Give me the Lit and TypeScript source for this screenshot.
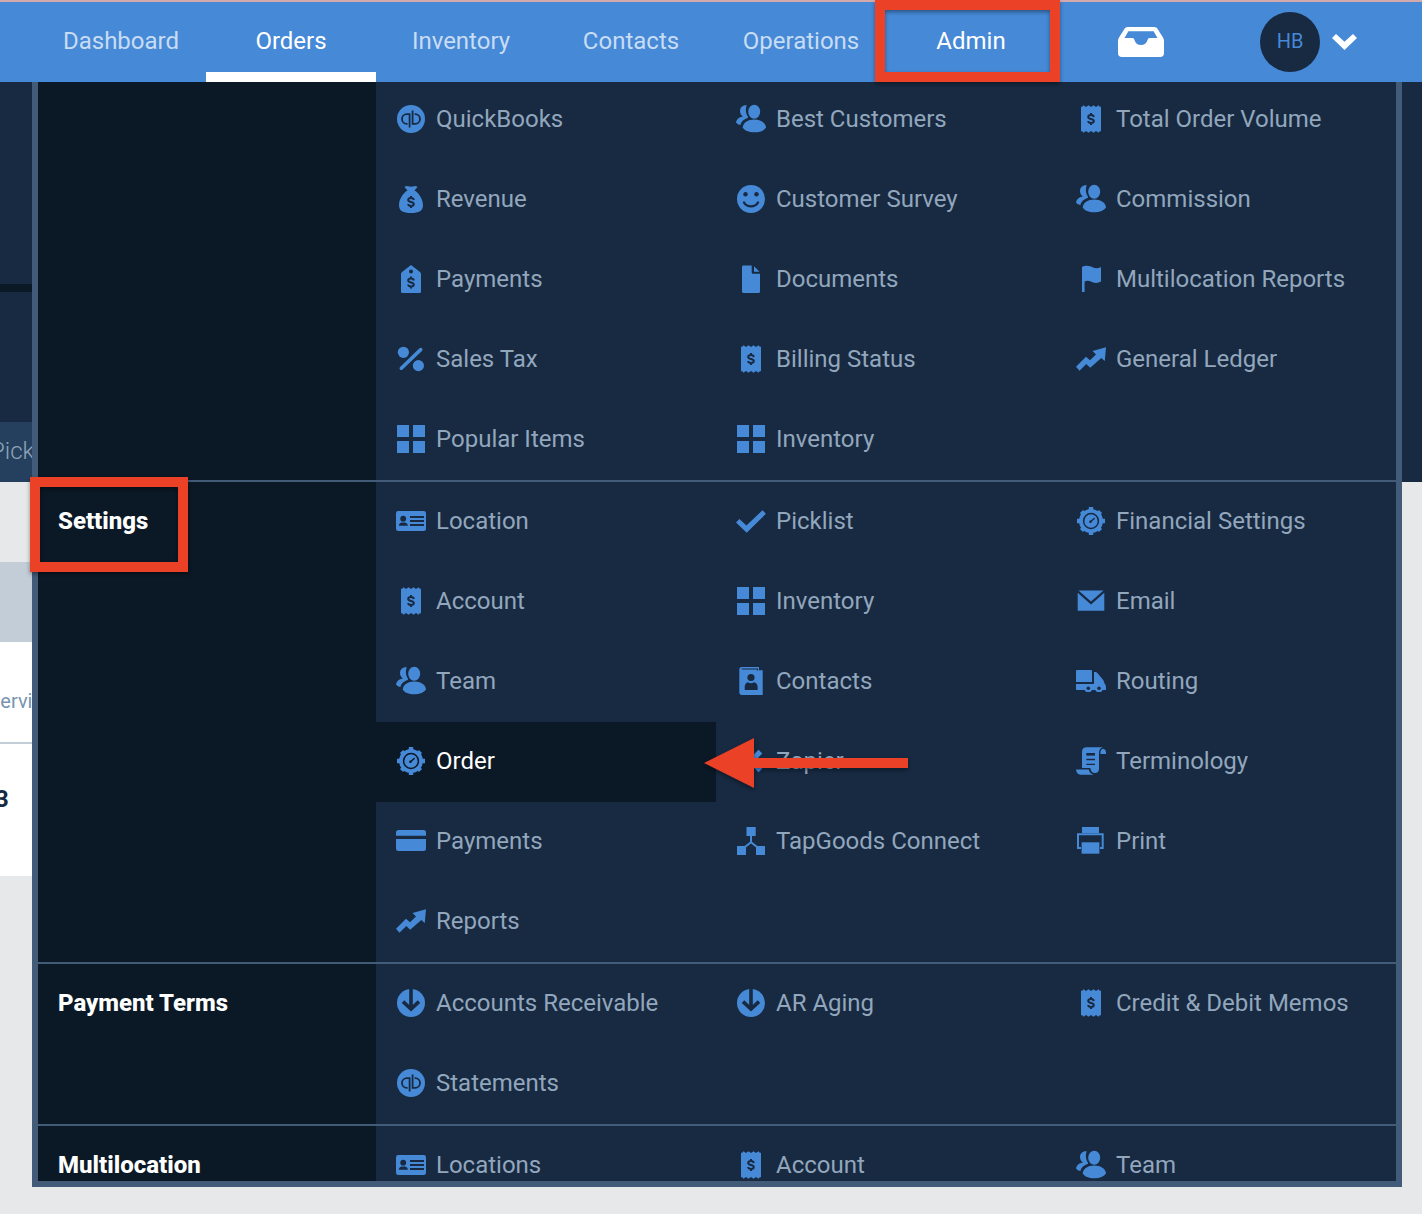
import { LitElement, html, css, svg, type SVGTemplateResult } from "lit";
import { customElement, property } from "lit/decorators.js";
import { classMap } from "lit/directives/class-map.js";

const dollar = (y: number) => svg`
  <g class="cut-line" transform="translate(15 ${y})" stroke-width="2">
    <path d="M2.8-2C2.6-3.3 1.4-4 0-4C-1.7-4-2.8-3.2-2.8-2C-2.8.8 2.8-.8 2.8 2C2.8 3.2 1.7 4 0 4C-1.5 4-2.7 3.3-2.8 2M0-6V-4M0 4V6" />
  </g>`;

const icons: Record<string, SVGTemplateResult> = {
  quickbooks: svg`
    <circle cx="15" cy="15" r="14" />
    <path class="cut-line" stroke-width="1.8" d="M13.6 23.4V10.2H10.8a4.8 4.8 0 0 0 0 9.6h.8M16.6 6.6V19.8h2.6a4.8 4.8 0 0 0 0-9.6h-.6" />`,
  moneybag: svg`
    <path d="M8.5 3Q10 1.4 12 2.3Q15 3.2 18 2.3Q20 1.4 21.5 3L18.5 6.5C23 9 27 15.500 27 21C27 27 23 29 15 29S3 27 3 21C3 15.500 7 9 11.500 6.500Z" />
    ${dollar(18)}`,
  tag: svg`
    <path d="M15 1L24 8Q25 8.800 25 10V27.500Q25 29 23.500 29H6.500Q5 29 5 27.500V10Q5 8.800 6 8Z" />
    <circle class="cut" cx="15" cy="7.500" r="2" />
    ${dollar(18.5)}`,
  percent: svg`
    <circle cx="7.400" cy="8.300" r="5.600" />
    <circle cx="22.400" cy="21.600" r="5.600" />
    <path class="line" stroke-width="3.600" stroke-linecap="round" d="M5.300 24.200L24.700 5.600" />`,
  grid: svg`<path d="M1 1H13V13H1ZM17 1H29V13H17ZM1 17H13V29H1ZM17 17H29V29H17Z" />`,
  people: svg`
    <ellipse cx="18.200" cy="7.800" rx="6" ry="7" />
    <path d="M6.700 23.500C7 18.500 12 15.500 18.300 15.500S29.700 18.500 30 23.500C28 26.700 24 28.300 18.300 28.300S8.500 26.700 6.700 23.500Z" />
    <path d="M10.800 1.200C6.500.8 4 3.500 4 7C4 9.500 5.200 11.600 7 12.400C3 12.900 .4 15.400 0 18.600Q1.600 20.700 4.300 21C5.200 17.500 8 15 12 13.700L11.800 12.200C9.600 9.500 9.400 4.200 10.800 1.200Z" />`,
  smile: svg`
    <circle cx="15" cy="15" r="14" />
    <circle class="cut" cx="9.500" cy="10.200" r="2.200" />
    <circle class="cut" cx="20.500" cy="10.200" r="2.200" />
    <path class="cut-line" stroke-width="2.400" stroke-linecap="round" d="M8 18.500C11 23.600 19 23.600 22 18.500" />`,
  file: svg`
    <path d="M7.500 1.600H15.700V8.500Q15.700 9.800 17 9.800H24V27.500Q24 29 22.500 29H7.500Q6 29 6 27.500V3Q6 1.600 7.500 1.600Z" />
    <path d="M18 2.200L23.600 7.800H18Z" />`,
  receipt: svg`
    <path d="M5 2.600L6 3L7.500 1.200L10 3L12.500 1.200L15 3L17.500 1.200L20 3L22.500 1.200L24 3L25 2.600V27.400L24 27L22.500 28.800L20 27L17.500 28.800L15 27L12.500 28.800L10 27L7.500 28.800L6 27L5 27.400Z" />
    ${dollar(15)}`,
  flag: svg`<path d="M6 3C11 .8 14 2.300 17 3.500C20 4.600 22.500 4.400 25 3V17.500C22 19.300 19 19.300 16 18C13 16.700 11 16.500 8.600 17.400V28H6Z" />`,
  trend: svg`<path d="M0 22.700L10 12.700L14 16.300L20 10.500L16.500 7L30 3.300L28.800 17L25.300 14L14.200 23.700L10.300 20L3.500 26.700Z" />`,
  idcard: svg`
    <rect y="5" width="30" height="20" rx="2.200" />
    <circle class="cut" cx="7.200" cy="12.700" r="2.900" />
    <path class="cut" d="M2.800 19.700C3 17.300 4.600 16.600 6 16.400H8.400C10 16.600 11.600 17.300 11.900 19.700Z" />
    <path class="cut-line" stroke-width="1.900" d="M14 11H28M14 15H28M14 19H28" />`,
  gear: svg`
    <circle cx="15" cy="15" r="12" />
    <path class="line" stroke-width="4.400" d="M15 1V29M1 15H29M5.500 5.500L24.500 24.500M24.500 5.500L5.500 24.500" />
    <circle class="cut-ring" cx="15" cy="15" r="7.400" stroke-width="1.500" />
    <path class="cut-line" stroke-width="1.400" stroke-linecap="round" d="M14.200 16L18.200 12.400" />
    <circle class="cut" cx="14.500" cy="15.700" r="1.200" />`,
  card: svg`<path d="M2.500 4H27.500Q30 4 30 6.500V9.700H0V6.500Q0 4 2.500 4ZM0 13H30V22.500Q30 25 27.500 25H2.500Q0 25 0 22.500Z" />`,
  check: svg`<path d="M0 16.500L3.400 13L10.400 19.400L26.500 4.300L29.900 7.800L10.700 26.800Z" />`,
  cross: svg`<path class="line" stroke-width="5.400" d="M5.600 5.600L24.400 24.400M24.400 5.600L5.600 24.400" />`,
  addressbook: svg`
    <path d="M6 1H23V4.200H26.700V29H6Q3.300 29 3.300 26.300V3.700Q3.300 1 6 1Z" />
    <path class="cut-line" stroke-width="1.200" d="M5.800 3H21.500V4.600" />
    <circle class="cut" cx="15" cy="11.500" r="3.600" />
    <path class="cut" d="M8.700 24V20.500Q9 17 12 16.300Q15 18.300 18 16.300Q21.300 17 21.600 20.500V24Z" />`,
  network: svg`
    <path d="M10.500 1H19.700V10H10.500ZM1 20H10V29H1ZM20 20H29V29H20Z" />
    <path class="line" stroke-width="2" d="M15 9V16.500M7 22.500L15 16.300L23 22.500" />`,
  mail: svg`<path d="M2.500 4.600H27.500L15 15.500ZM1.700 6.800L15 18.500L28.300 6.800V24.700H1.700Z" />`,
  truck: svg`
    <path d="M0 5Q0 4 1 4H15Q16 4 16 5V16H0Z" />
    <path d="M0 18H18V6H19.500Q21 6.300 22 7.800L27 13.800Q28 15 28.300 17L29.600 19Q30 20 30 24H0.800Q0 24 0 23Z" />
    <circle cx="12.300" cy="22.200" r="3.900" />
    <circle cx="23" cy="22.200" r="3.900" />
    <circle class="cut" cx="12.300" cy="22.200" r="1.800" />
    <circle class="cut" cx="23" cy="22.200" r="1.800" />`,
  scroll: svg`
    <path d="M10 1.300H27Q23 2.300 23 7V23Q22.800 27 19 27Q15 27 14.300 22H6V6Q6 1.600 10 1.300Z" />
    <path d="M24.400 8V6Q24.800 3 27.200 2.800Q29.800 3.200 30 6V8Z" />
    <path d="M0 23.500H12.800Q13.400 27.300 17.500 28.700H4.500Q.6 28.200 0 23.500Z" />
    <path class="cut-line" d="M10.300 8.300H19" stroke-width="2.600" />
    <path class="cut-line" d="M10.300 13.500H19M10.300 18.400H19" stroke-width="1.400" />`,
  printer: svg`
    <path d="M6 1H23V7H6Z" />
    <path class="line" stroke-width="2" d="M5 22H2V8.300H26.700V22H24" />
    <path d="M5.600 16.300H23.400V27.700H5.600Z" />`,
  download: svg`
    <circle cx="15" cy="15" r="14" />
    <path class="cut-line" stroke-width="3.600" d="M15 0V19M7 13.600L15 21L23 13.600" />`,
};

interface MenuItem {
  label: string;
  icon: string;
  active?: boolean;
}

interface MenuSection {
  title: string;
  items: MenuItem[];
}

const item = (label: string, icon: string, active = false): MenuItem => ({ label, icon, active });

const sections: MenuSection[] = [
  {
    title: "",
    items: [
      item("QuickBooks", "quickbooks"),
      item("Best Customers", "people"),
      item("Total Order Volume", "receipt"),
      item("Revenue", "moneybag"),
      item("Customer Survey", "smile"),
      item("Commission", "people"),
      item("Payments", "tag"),
      item("Documents", "file"),
      item("Multilocation Reports", "flag"),
      item("Sales Tax", "percent"),
      item("Billing Status", "receipt"),
      item("General Ledger", "trend"),
      item("Popular Items", "grid"),
      item("Inventory", "grid"),
    ],
  },
  {
    title: "Settings",
    items: [
      item("Location", "idcard"),
      item("Picklist", "check"),
      item("Financial Settings", "gear"),
      item("Account", "receipt"),
      item("Inventory", "grid"),
      item("Email", "mail"),
      item("Team", "people"),
      item("Contacts", "addressbook"),
      item("Routing", "truck"),
      item("Order", "gear", true),
      item("Zapier", "cross"),
      item("Terminology", "scroll"),
      item("Payments", "card"),
      item("TapGoods Connect", "network"),
      item("Print", "printer"),
      item("Reports", "trend"),
    ],
  },
  {
    title: "Payment Terms",
    items: [
      item("Accounts Receivable", "download"),
      item("AR Aging", "download"),
      item("Credit & Debit Memos", "receipt"),
      item("Statements", "quickbooks"),
    ],
  },
  {
    title: "Multilocation",
    items: [item("Locations", "idcard"), item("Account", "receipt"), item("Team", "people")],
  },
];

@customElement("menu-icon")
class MenuIcon extends LitElement {
  @property() name = "";

  static styles = css`
    :host {
      display: block;
      flex: none;
      width: 30px;
      height: 30px;
    }
    svg {
      display: block;
      fill: #4689d7;
    }
    .line {
      fill: none;
      stroke: #4689d7;
    }
    .cut {
      fill: var(--surface);
    }
    .cut-line,
    .cut-ring {
      fill: none;
      stroke: var(--surface);
    }
  `;

  render() {
    return html`<svg width="30" height="30" viewBox="0 0 30 30" aria-hidden="true">${icons[this.name]}</svg>`;
  }
}

@customElement("top-bar")
class TopBar extends LitElement {
  static styles = css`
    :host {
      display: block;
      position: relative;
      z-index: 2;
    }
    .bar {
      display: flex;
      box-sizing: border-box;
      height: 82px;
      padding-left: 36px;
      padding-right: 65px;
      border-top: 2px solid #d3a9ad;
      background: #4689d7;
    }
    .nav {
      display: flex;
      flex: 0 1 1190px;
    }
    .link {
      flex: 1 1 0;
      display: flex;
      align-items: center;
      justify-content: center;
      box-sizing: border-box;
      padding-bottom: 2px;
      font-size: 24px;
      color: #c8dcf3;
      text-decoration: none;
    }
    .current {
      color: #fff;
    }
    .underlined {
      box-shadow: inset 0 -10px #fff;
    }
    .inbox {
      padding-bottom: 0;
    }
    .profile {
      display: flex;
      align-items: center;
      gap: 12px;
      margin-left: auto;
      padding: 0;
      border: 0;
      background: none;
      font: inherit;
    }
    .avatar {
      display: flex;
      align-items: center;
      justify-content: center;
      box-sizing: border-box;
      width: 60px;
      height: 60px;
      padding-bottom: 2px;
      border-radius: 50%;
      background: #172a42;
      color: #4689d7;
      font-size: 20px;
    }
  `;

  render() {
    return html`<header class="bar">
      <nav class="nav">
        <a class="link" href="#dashboard">Dashboard</a>
        <a class="link current underlined" href="#orders">Orders</a>
        <a class="link" href="#inventory">Inventory</a>
        <a class="link" href="#contacts">Contacts</a>
        <a class="link" href="#operations">Operations</a>
        <a class="link current" href="#admin">Admin</a>
        <a class="link inbox" href="#inbox" aria-label="Inbox">
          <svg width="46" height="30" viewBox="0 0 46 30" fill="#fff" fill-rule="evenodd" aria-hidden="true">
            <path
              d="M9.500 0H36.500Q38.500 0 39.300 1.600L45 10.500Q46 12 46 14V26Q46 30 42 30H4Q0 30 0 26V14Q0 12 1 10.500L6.700 1.600Q7.500 0 9.500 0ZM10.400 4.200L6.500 11H14.500Q16 11 16.300 12.500C17.300 16.300 19.800 18 23 18S28.700 16.300 29.700 12.500Q30 11 31.500 11H39.500L35.600 4.200Z"
            />
          </svg>
        </a>
      </nav>
      <button class="profile" type="button" aria-label="Account menu">
        <span class="avatar">HB</span>
        <svg width="25" height="16" viewBox="0 0 25 16" fill="#fff" aria-hidden="true">
          <path d="M0 4L4 0L12.500 7.800L21 0L25 4L12.500 16Z" />
        </svg>
      </button>
    </header>`;
  }
}

@customElement("orders-page")
class OrdersPage extends LitElement {
  static styles = css`
    :host {
      display: block;
    }
    .hero {
      background: #172a42;
    }
    .body,
    .clip {
      margin-right: 40px;
    }
    .clip {
      overflow: hidden;
      white-space: nowrap;
    }
    .summary {
      box-sizing: border-box;
      height: 210px;
      border-bottom: 8px solid #0b1825;
    }
    .filters {
      height: 130px;
    }
    .tabs {
      height: 60px;
      line-height: 58px;
      background: #25405e;
      color: #8fa4b9;
      font-size: 24px;
      font-weight: 300;
      text-indent: -10px;
    }
    .body {
      padding-top: 80px;
    }
    .strip {
      height: 80px;
      background: #c3cdd7;
    }
    .table {
      background: #fff;
    }
    .head {
      height: 100px;
      line-height: 118px;
      border-bottom: 2px solid #c3cdd7;
      color: #7894b0;
      font-size: 20px;
      text-indent: -10px;
    }
    .row {
      height: 132px;
      line-height: 110px;
      color: #172a42;
      font-size: 24px;
      font-weight: 700;
      text-indent: -5px;
    }
  `;

  render() {
    return html`
      <div class="hero">
        <div class="clip summary"></div>
        <div class="clip filters"></div>
        <div class="clip tabs">Pick</div>
      </div>
      <div class="body">
        <div class="strip"></div>
        <div class="table">
          <div class="clip head">servi</div>
          <div class="clip row">3</div>
        </div>
      </div>
    `;
  }
}

@customElement("admin-menu")
class AdminMenu extends LitElement {
  static styles = css`
    :host {
      --surface: #172a42;
      display: block;
      box-sizing: border-box;
      overflow: hidden;
      border: 6px solid #415b78;
      border-top: 0;
      background: var(--surface);
    }
    .section {
      display: grid;
      grid-template-columns: 338px 1fr;
      border-bottom: 2px solid #415b78;
    }
    .title {
      margin: 0;
      padding: 0 20px;
      background: #0b1825;
      color: #fff;
      font-size: 24px;
      font-weight: 800;
      line-height: 78px;
    }
    .items {
      display: grid;
      grid-template-columns: repeat(3, 1fr);
      grid-auto-rows: 80px;
    }
    .item {
      display: flex;
      align-items: center;
      gap: 10px;
      box-sizing: border-box;
      padding: 0 20px 2px;
      color: #92a6bc;
      font-size: 24px;
      text-decoration: none;
      white-space: nowrap;
    }
    .active {
      --surface: #0b1825;
      background: var(--surface);
      color: #fff;
    }
  `;

  render() {
    return sections.map(
      (section) => html`<section class="section">
        <h2 class="title">${section.title}</h2>
        <div class="items">
          ${section.items.map(
            (entry) => html`<a class=${classMap({ item: true, active: !!entry.active })} href="#admin">
              <menu-icon name=${entry.icon}></menu-icon>
              <span>${entry.label}</span>
            </a>`,
          )}
        </div>
      </section>`,
    );
  }
}

@customElement("app-root")
class AppRoot extends LitElement {
  static styles = css`
    :host {
      display: block;
      position: relative;
      min-height: 100vh;
      overflow: hidden;
      background: #e6e8ea;
      font-family: Roboto, "Liberation Sans", sans-serif;
    }
    .menu {
      position: absolute;
      top: 80px;
      right: 20px;
      bottom: 27px;
      left: 32px;
      z-index: 1;
    }
    .mark {
      position: absolute;
      z-index: 3;
      box-sizing: border-box;
      pointer-events: none;
      filter: drop-shadow(0 2px 2px rgba(0, 0, 0, 0.4));
    }
    .frame {
      border: 10px solid #eb4126;
    }
    .admin {
      top: 0;
      left: 875px;
      width: 185px;
      height: 82px;
    }
    .settings {
      top: 477px;
      left: 30px;
      width: 158px;
      height: 95px;
    }
    .arrow {
      top: 738px;
      left: 704px;
    }
  `;

  render() {
    return html`
      <top-bar></top-bar>
      <orders-page></orders-page>
      <admin-menu class="menu"></admin-menu>
      <div class="mark frame admin"></div>
      <div class="mark frame settings"></div>
      <svg class="mark arrow" width="204" height="50" viewBox="0 0 204 50" fill="#eb4126" aria-hidden="true">
        <path d="M0 25L50 0V20H204V30H50V50Z" />
      </svg>
    `;
  }
}
